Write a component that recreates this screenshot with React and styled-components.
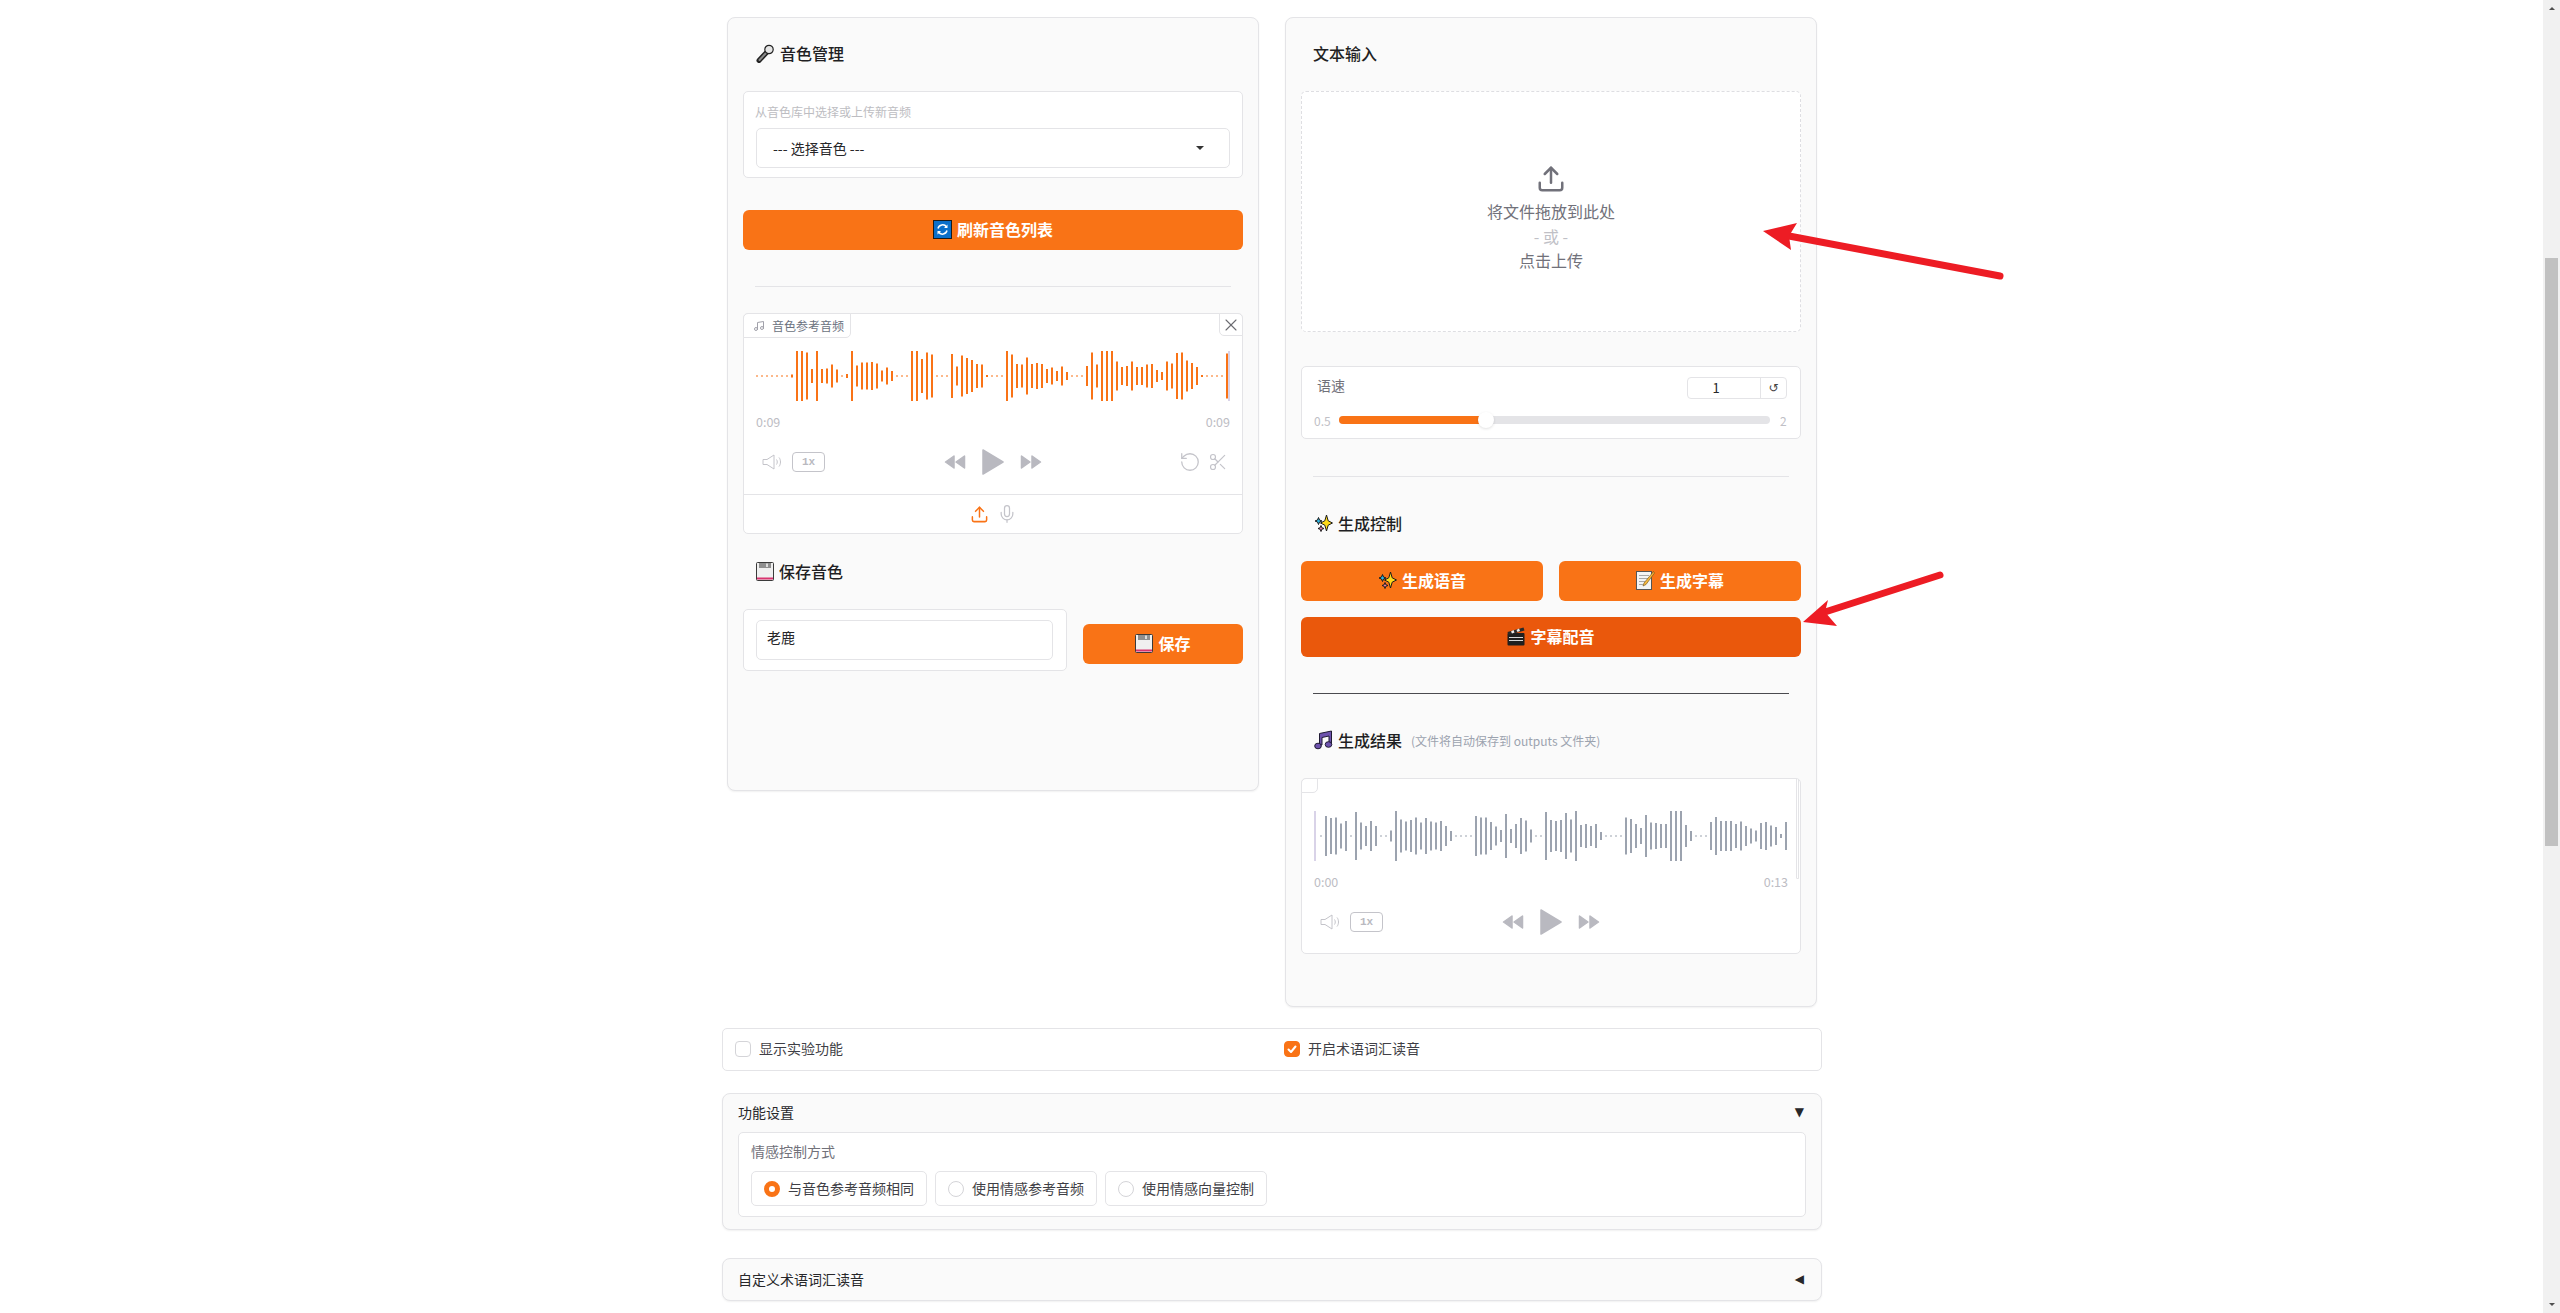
import React from 'react';
import styled, { createGlobalStyle } from 'styled-components';
import { Music, Mic, RotateCcw, Scissors, Upload, X } from 'lucide-react';

const ORANGE = '#f97316';
const BORDER = '#e4e4e7';

// bar heights in px, read off the reference waveforms
const refWave = [1,1,1,1,1,1,1,3,50,50,47,14,50,14,15,23,13,1,4,50,21,27,27,28,25,11,17,10,1,1,1,50,50,34,47,43,1,1,1,44,19,41,36,32,24,23,2,1,1,1,50,43,24,23,37,24,26,24,14,17,10,19,8,1,1,1,20,47,23,50,50,50,29,18,20,29,18,18,23,24,12,8,29,25,46,47,31,26,18,2,1,1,1,1,45];
const resultWave = [1,40,36,37,25,30,1,48,27,20,30,20,1,1,11,50,33,29,32,37,27,36,29,27,30,20,10,1,1,1,1,40,37,37,28,19,12,44,14,24,36,31,13,1,1,48,32,30,32,46,33,50,22,24,20,24,8,1,1,1,1,37,34,24,16,42,27,26,24,24,50,50,50,22,10,1,1,1,28,38,30,30,30,24,29,20,15,11,26,28,21,18,4,28];

const GlobalStyle = createGlobalStyle`
    html, body {
        margin: 0;
        height: 1313px;
        overflow: hidden;
        background: #fff;
        color: #27272a;
        font-family: "Noto Sans CJK SC", "Noto Sans", sans-serif;
    }
    * { box-sizing: border-box; }
`;

const Page = styled.div`
    position: relative;
    display: flex;
    width: 2560px;
    height: 1313px;
    overflow: hidden;
`;

const Main = styled.main`
    flex: 1;
    padding-top: 17px;
`;

const Container = styled.div`
    width: 1100px;
    margin: 0 auto 0 722px;
`;

const Columns = styled.div`
    display: flex;
    align-items: flex-start;
    gap: 26px;
    padding: 0 5px;
`;

const Panel = styled.section`
    width: 532px;
    min-height: ${p => p.$minHeight || 0}px;
    padding: 0 15px ${p => p.$bottom || 0}px;
    background: #fafafa;
    border: 1px solid ${BORDER};
    border-radius: 8px;
    box-shadow: 0 1px 2px rgba(0, 0, 0, .06);
`;

const Title = styled.h3`
    display: flex;
    align-items: center;
    gap: 5px;
    height: 24px;
    margin: ${p => p.$mt}px 0 25px;
    padding: 0 0 2px ${p => (p.$flush ? 12 : 13)}px;
    font-size: 16px;
    font-weight: 500;
    line-height: 22px;
    color: #1f1f23;
`;

const TitleNote = styled.span`
    margin-left: 4px;
    margin-top: 2px;
    font-size: 12px;
    font-weight: 400;
    color: #9ca3af;
`;

const Group = styled.div`
    background: #fff;
    border: 1px solid ${BORDER};
    border-radius: 5px;
`;

const SelectGroup = styled(Group)`
    height: 87px;
    padding: 11px 12px 0;
`;

const SmallLabel = styled.div`
    margin: 0 0 7px -1px;
    font-size: 12px;
    line-height: 18px;
    color: #bdbdc2;
`;

const Select = styled.div`
    display: flex;
    align-items: center;
    justify-content: space-between;
    height: 40px;
    padding: 0 25px 1px 16px;
    border: 1px solid ${BORDER};
    border-radius: 5px;
    font-size: 14px;
    color: #27272a;
`;

const Caret = styled.span`
    width: 0;
    height: 0;
    border-left: 4px solid transparent;
    border-right: 4px solid transparent;
    border-top: 4px solid #333;
`;

const Button = styled.button`
    display: flex;
    align-items: center;
    justify-content: center;
    gap: 5px;
    flex: ${p => (p.$grow ? '1' : 'none')};
    width: ${p => (p.$grow ? 'auto' : p.$width ? `${p.$width}px` : '100%')};
    height: 40px;
    margin-top: ${p => p.$mt || 0}px;
    padding: 0 0 2px;
    border: 0;
    border-radius: 6px;
    background: ${p => (p.$dark ? '#ea580c' : ORANGE)};
    color: #fff;
    font-family: inherit;
    font-size: 16px;
    font-weight: 700;
    line-height: 22px;
`;

const Divider = styled.hr`
    height: 1px;
    margin: ${p => p.$mt || 36}px 12px 0;
    border: 0;
    background: ${p => (p.$dark ? '#4a4a4f' : BORDER)};
`;

const AudioBox = styled.div`
    position: relative;
    margin-top: ${p => p.$mt || 0}px;
    padding-top: ${p => p.$top}px;
    background: #fff;
    border: 1px solid ${BORDER};
    border-radius: 5px;
`;

const AudioTab = styled.div`
    position: absolute;
    top: -1px;
    left: -1px;
    display: flex;
    align-items: center;
    gap: 7px;
    width: ${p => (p.$empty ? 17 : 108)}px;
    height: ${p => (p.$empty ? 15 : 25)}px;
    padding-left: 9px;
    background: #fff;
    border: 1px solid ${BORDER};
    border-radius: 5px 0 5px 0;
    font-size: 12px;
    color: #6b7280;
`;

const CloseTab = styled.div`
    position: absolute;
    top: -1px;
    right: -1px;
    display: flex;
    align-items: center;
    justify-content: center;
    width: 24px;
    height: 23px;
    background: #fff;
    border: 1px solid ${BORDER};
    border-radius: 0 5px 0 5px;
    color: #6b6b70;
`;

const EdgeSliver = styled.div`
    position: absolute;
    top: 0;
    right: 1px;
    width: 3px;
    height: 100px;
    border: 1px solid ${BORDER};
    border-top: 0;
    border-radius: 0 0 3px 3px;
`;

const WaveWrap = styled.div`
    height: 50px;
    margin: 0 12px;
`;

const WaveSvg = styled.svg`
    display: block;
`;

const TimeRow = styled.div`
    display: flex;
    justify-content: space-between;
    margin: 12px 12px 0;
    font-size: 12.5px;
    line-height: 18px;
    color: #bdbdc4;
`;

const ControlRow = styled.div`
    display: grid;
    grid-template-columns: 1fr auto 1fr;
    align-items: center;
    height: 26px;
    margin-top: 18px;
    padding: 0 14px;
    margin-bottom: ${p => p.$bottom || 0}px;
`;

const ControlGroup = styled.div`
    display: flex;
    align-items: center;
    justify-content: ${p => (p.$end ? 'flex-end' : 'flex-start')};
    gap: ${p => p.$gap}px;
    padding-left: ${p => p.$inset || 0}px;
    color: #c4c4ca;
`;

const RateButton = styled.span`
    display: flex;
    align-items: center;
    justify-content: center;
    width: 33px;
    height: 20px;
    border: 1px solid #c4c4ca;
    border-radius: 4px;
    font-family: "Liberation Mono", monospace;
    font-size: 11px;
    font-weight: 700;
    color: #b9b9c0;
`;

const AudioFooter = styled.div`
    display: flex;
    align-items: center;
    justify-content: center;
    gap: 8px;
    height: 39px;
    margin-top: 19px;
    border-top: 1px solid ${BORDER};
    color: #c4c4ca;
`;

const OrangeIcon = styled.span`
    display: flex;
    color: ${ORANGE};
`;

const SaveRow = styled.div`
    display: flex;
    align-items: flex-start;
    gap: 16px;
`;

const InputGroup = styled(Group)`
    width: 324px;
    height: 62px;
    padding: 10px 13px 10px 12px;
`;

const NameInput = styled.div`
    height: 40px;
    padding: 5px 10px;
    border: 1px solid ${BORDER};
    border-radius: 5px;
    font-size: 14px;
    line-height: 22px;
`;

const DropZone = styled.div`
    display: flex;
    flex-direction: column;
    align-items: center;
    height: 241px;
    padding-top: 72px;
    background: #fff;
    border: 1px dashed #dedee2;
    border-radius: 5px;
    color: #71717a;
`;

const DropLine = styled.div`
    margin-top: ${p => p.$mt || 0}px;
    font-size: 16px;
    line-height: 24.5px;
    color: ${p => (p.$muted ? '#c0c0c6' : '#71717a')};
`;

const SliderBox = styled(Group)`
    height: 73px;
    margin-top: 34px;
    padding: 10px 13px 0 12px;
`;

const SliderHead = styled.div`
    display: flex;
    align-items: flex-start;
    justify-content: space-between;
    height: 22px;
`;

const SliderLabel = styled.span`
    margin-left: 3px;
    font-size: 14px;
    line-height: 16px;
    color: #71717a;
`;

const NumberField = styled.div`
    display: flex;
    width: 100px;
    height: 22px;
    border: 1px solid ${BORDER};
    border-radius: 4px;
    font-size: 13px;
    line-height: 19px;
    color: #27272a;
`;

const NumberValue = styled.span`
    flex: 1;
    padding-right: 16px;
    text-align: center;
`;

const ResetCell = styled.span`
    display: flex;
    align-items: center;
    justify-content: center;
    width: 26px;
    border-left: 1px solid ${BORDER};
    font-family: "DejaVu Sans", sans-serif;
    font-size: 12px;
    color: #444;
`;

const SliderRow = styled.div`
    display: flex;
    align-items: center;
    height: 18px;
    margin-top: 12px;
    font-size: 12px;
    color: #c0c0c6;
`;

const SliderMin = styled.span`
    width: 25px;
`;

const SliderMax = styled.span`
    width: 17px;
    padding-left: 10px;
`;

const Track = styled.div`
    position: relative;
    flex: 1;
    height: 8px;
    border-radius: 4px;
    background: #e4e4e7;
`;

const TrackFill = styled.div`
    height: 100%;
    border-radius: 4px 0 0 4px;
    background: ${ORANGE};
`;

const Thumb = styled.div`
    position: absolute;
    top: -4px;
    width: 16px;
    height: 16px;
    margin-left: -8px;
    border-radius: 50%;
    background: #fff;
    box-shadow: 0 1px 3px rgba(0, 0, 0, .12);
`;

const ButtonRow = styled.div`
    display: flex;
    gap: 16px;
`;

const CheckRow = styled.div`
    display: flex;
    align-items: center;
    height: 43px;
    margin-top: 21px;
    padding: 0 0 1px 12px;
    background: #fff;
    border: 1px solid ${BORDER};
    border-radius: 5px;
`;

const CheckItem = styled.label`
    display: flex;
    align-items: center;
    gap: 8px;
    width: ${p => p.$width || 'auto'};
    font-size: 14px;
    line-height: 18px;
    color: #3f3f46;
`;

const CheckText = styled.span`
    padding-bottom: 2px;
`;

const CheckBox = styled.span`
    display: flex;
    align-items: center;
    justify-content: center;
    width: 16px;
    height: 16px;
    border: 1px solid ${p => (p.$on ? ORANGE : '#d4d4d8')};
    border-radius: 4px;
    background: ${p => (p.$on ? ORANGE : '#fff')};
`;

const Accordion = styled.section`
    margin-top: ${p => p.$mt}px;
    padding: 0 15px;
    background: #fafafa;
    border: 1px solid ${BORDER};
    border-radius: 8px;
    box-shadow: 0 1px 2px rgba(0, 0, 0, .06);
`;

const AccordionHead = styled.div`
    display: flex;
    align-items: center;
    justify-content: space-between;
    height: ${p => p.$height}px;
    padding: 0 2px 2px 0;
    font-size: 14px;
    line-height: 18px;
    color: #27272a;
`;

const Toggle = styled.span`
    font-family: "DejaVu Sans", sans-serif;
    font-size: 12px;
    color: #27272a;
`;

const AccordionBody = styled(Group)`
    height: 85px;
    margin-bottom: 12px;
    padding: 9px 12px 0;
`;

const FieldLabel = styled.div`
    margin-bottom: 11px;
    font-size: 14px;
    line-height: 18px;
    color: #71717a;
`;

const RadioRow = styled.div`
    display: flex;
    gap: 8px;
`;

const RadioItem = styled.label`
    display: flex;
    align-items: center;
    gap: 8px;
    height: 35px;
    padding: 0 12px;
    background: #fff;
    border: 1px solid ${BORDER};
    border-radius: 5px;
    font-size: 14px;
    line-height: 18px;
    color: #3f3f46;
`;

const RadioDot = styled.span`
    width: 16px;
    height: 16px;
    border-radius: 50%;
    border: ${p => (p.$on ? `5px solid ${ORANGE}` : '1px solid #d4d4d8')};
    background: #fff;
`;

const Scrollbar = styled.aside`
    display: flex;
    flex-direction: column;
    width: 17px;
    height: 1313px;
    background: #f1f1f1;
`;

const ScrollArrow = styled.div`
    display: flex;
    align-items: center;
    justify-content: center;
    height: 17px;
    margin-top: ${p => (p.$down ? 'auto' : 0)};
    &::after {
        content: '';
        border-left: 3.5px solid transparent;
        border-right: 3.5px solid transparent;
        ${p => (p.$down ? 'border-top' : 'border-bottom')}: 3px solid #505050;
    }
`;

const ScrollThumb = styled.div`
    height: 588px;
    margin: 241px 2px 0;
    background: #c1c1c1;
`;

const Annotations = styled.svg`
    position: absolute;
    top: 0;
    left: 0;
    pointer-events: none;
`;

const Wave = ({ bars, color, startX, width, cursorX, thickLast }) =>
    <WaveWrap>
        <WaveSvg width={width} height="50" viewBox={`0 0 ${width} 50`}>
            {bars.map((h, i) =>
                <rect key={i} x={startX + i * 5} y={25 - h / 2} width={thickLast && i === bars.length - 1 ? 2.5 : 2} height={h} fill={color} />
            )}
            <rect x={cursorX} y="0" width="2" height="50" fill="#d9d3e8" />
        </WaveSvg>
    </WaveWrap>

const VolumeIcon = () =>
    <svg width="21" height="16" viewBox="0 0 21 16" fill="none" stroke="currentColor" strokeWidth="1">
        <path d="M1 5.500h4L12 1v14L5 10.500H1z" strokeLinejoin="round" />
        <path d="M14.500 5.500c1 1.500 1 3.500 0 5" />
        <path d="M17 3.500c2 2.500 2 6.500 0 9" />
    </svg>

const SkipIcon = ({ flip }) =>
    <svg width="22" height="16" viewBox="0 0 22 16" fill="#b9b9c0" stroke="#b9b9c0" strokeWidth="1.500" strokeLinejoin="round" transform={flip ? 'scale(-1 1)' : undefined}>
        <path d="M10 2L1.500 8 10 14z" />
        <path d="M20.500 2L12 8l8.500 6z" />
    </svg>

const PlayIcon = () =>
    <svg width="22" height="26" viewBox="0 0 22 26" fill="#b9b9c0" stroke="#b9b9c0" strokeWidth="1.500" strokeLinejoin="round">
        <path d="M1 1l20 12L1 25z" />
    </svg>

const MicEmoji = () =>
    <svg width="19" height="19" viewBox="0 0 19 19">
        <path d="M3 16.500L11 8" stroke="#222" strokeWidth="5" strokeLinecap="round" />
        <path d="M3.500 16L11 8" stroke="#8a8a8a" strokeWidth="2" strokeLinecap="round" />
        <circle cx="13" cy="5.500" r="4.200" fill="#e6e6e6" stroke="#222" strokeWidth="1.200" />
    </svg>

const RefreshEmoji = () =>
    <svg width="19" height="19" viewBox="0 0 19 19">
        <rect x=".5" y=".5" width="18" height="18" fill="#0b6fc9" stroke="#1a1a1a" />
        <path d="M5 8.500a4.700 4.700 0 0 1 8.500-1.500M14 10.500a4.700 4.700 0 0 1-8.500 1.500" fill="none" stroke="#fff" strokeWidth="1.500" />
        <path d="M14.500 4.500v3.500h-3.500zM4.500 14.500V11h3.500z" fill="#fff" />
    </svg>

const SaveEmoji = () =>
    <svg width="18" height="19" viewBox="0 0 18 19">
        <rect x=".5" y=".5" width="17" height="18" rx="1" fill="#f0f0f0" stroke="#3a3a3a" />
        <rect x="3" y="1" width="12" height="5" fill="#8f8f8f" />
        <rect x="10" y="1.500" width="2" height="3.500" fill="#dcdcdc" />
        <rect x="1" y="15.500" width="16" height="2" fill="#d8336e" />
    </svg>

const SparkleEmoji = () =>
    <svg width="19" height="19" viewBox="0 0 19 19" stroke="#1c1c1c" strokeWidth="1" strokeLinejoin="round">
        <path d="M12.500 1l1.700 5.800L18.500 9l-4.300 2.200L12.500 17l-1.700-5.800L6.500 9l4.300-2.200z" fill="#ffd91a" />
        <path d="M4.500 3.500l1 2.500 2.500 1-2.500 1-1 2.500-1-2.500L1 7l2.500-1z" fill="#2cb8e6" />
        <path d="M7 11.500l.8 2.200 2.200.8-2.200.8L7 17.500l-.8-2.200-2.200-.8 2.200-.8z" fill="#ef7fb4" />
    </svg>

const MemoEmoji = () =>
    <svg width="19" height="20" viewBox="0 0 19 20">
        <rect x=".5" y="1.500" width="15" height="18" fill="#f4f4f4" stroke="#555" />
        <path d="M3 5.500h10M3 8.500h9M3 11.500h6M3 14.500h4" stroke="#a8a8a8" />
        <path d="M17.500 1.500L8 13l-1 3 3-1.500L18.500 3z" fill="#f5b83d" stroke="#6b4a12" strokeWidth=".6" />
    </svg>

const ClapperEmoji = () =>
    <svg width="18" height="19" viewBox="0 0 18 19">
        <rect x=".5" y="6" width="17" height="12.500" rx="1" fill="#1f1f1f" />
        <path d="M2 10.500h14M2 13.500h14" stroke="#d8d8d8" />
        <path d="M.5 5L16.500.5 17.500 3.500 1.500 8z" fill="#2a2a2a" />
        <path d="M4 4.500L6.500 3l1 2.500-2.500 1zM9.500 3L12 1.500l1 2.500-2.500 1z" fill="#eee" />
    </svg>

const NoteEmoji = () =>
    <svg width="19" height="20" viewBox="0 0 19 20" fill="#6d52ad" stroke="#1f1a33" strokeWidth="1">
        <path d="M5.500 15V3.500L17.500 1v13h-2.500V6L8 7.500V15z" />
        <ellipse cx="4" cy="16" rx="3.300" ry="2.800" />
        <ellipse cx="14.500" cy="14.500" rx="3.300" ry="2.800" />
    </svg>

const CheckMark = () =>
    <svg width="10" height="9" viewBox="0 0 10 9" fill="none" stroke="#fff" strokeWidth="2" strokeLinecap="round" strokeLinejoin="round">
        <path d="M1.500 4.500L4 7l4.500-5.500" />
    </svg>

const Arrow = ({ head, tail, notch }) =>
    <>
        <line x1={notch[0]} y1={notch[1]} x2={tail[0]} y2={tail[1]} stroke="#ed1c24" strokeWidth="7" strokeLinecap="round" />
        <polygon points={head} fill="#ed1c24" />
    </>

const PlaybackControls = () =>
    <ControlGroup $gap={16}>
        <SkipIcon />
        <PlayIcon />
        <SkipIcon flip />
    </ControlGroup>

const VolumeControls = () =>
    <ControlGroup $gap={9} $inset={4}>
        <VolumeIcon />
        <RateButton>1x</RateButton>
    </ControlGroup>

const App = () =>
    <Page>
        <GlobalStyle />
        <Main>
            <Container>
                <Columns>
                    <Panel $minHeight={774}>
                        <Title $mt={24}><MicEmoji />音色管理</Title>
                        <SelectGroup>
                            <SmallLabel>从音色库中选择或上传新音频</SmallLabel>
                            <Select>--- 选择音色 ---<Caret /></Select>
                        </SelectGroup>
                        <Button $mt={32}><RefreshEmoji />刷新音色列表</Button>
                        <Divider />
                        <AudioBox $mt={26} $top={37}>
                            <AudioTab><Music size={12} color="#a1a1aa" />音色参考音频</AudioTab>
                            <CloseTab><X size={20} strokeWidth={1.3} /></CloseTab>
                            <Wave bars={refWave} color="#f97316" startX={0} width={474} cursorX={472} thickLast />
                            <TimeRow><span>0:09</span><span>0:09</span></TimeRow>
                            <ControlRow>
                                <VolumeControls />
                                <PlaybackControls />
                                <ControlGroup $gap={7} $end>
                                    <RotateCcw size={22} strokeWidth={1.4} />
                                    <Scissors size={20} strokeWidth={1.4} />
                                </ControlGroup>
                            </ControlRow>
                            <AudioFooter>
                                <OrangeIcon><Upload size={19} strokeWidth={1.9} /></OrangeIcon>
                                <Mic size={20} strokeWidth={1.5} />
                            </AudioFooter>
                        </AudioBox>
                        <Title $mt={26}><SaveEmoji />保存音色</Title>
                        <SaveRow>
                            <InputGroup><NameInput>老鹿</NameInput></InputGroup>
                            <Button $width={160} $mt={15}><SaveEmoji />保存</Button>
                        </SaveRow>
                    </Panel>

                    <Panel $bottom={52}>
                        <Title $mt={24} $flush>文本输入</Title>
                        <DropZone>
                            <Upload size={30} strokeWidth={2} />
                            <DropLine $mt={5}>将文件拖放到此处</DropLine>
                            <DropLine $muted>- 或 -</DropLine>
                            <DropLine>点击上传</DropLine>
                        </DropZone>
                        <SliderBox>
                            <SliderHead>
                                <SliderLabel>语速</SliderLabel>
                                <NumberField>
                                    <NumberValue>1</NumberValue>
                                    <ResetCell>↺</ResetCell>
                                </NumberField>
                            </SliderHead>
                            <SliderRow>
                                <SliderMin>0.5</SliderMin>
                                <Track>
                                    <TrackFill style={{ width: '34%' }} />
                                    <Thumb style={{ left: '34%' }} />
                                </Track>
                                <SliderMax>2</SliderMax>
                            </SliderRow>
                        </SliderBox>
                        <Divider $mt={37} />
                        <Title $mt={35}><SparkleEmoji />生成控制</Title>
                        <ButtonRow>
                            <Button $grow><SparkleEmoji />生成语音</Button>
                            <Button $grow><MemoEmoji />生成字幕</Button>
                        </ButtonRow>
                        <Button $dark $mt={16}><ClapperEmoji />字幕配音</Button>
                        <Divider $dark />
                        <Title $mt={35}><NoteEmoji />生成结果<TitleNote>(文件将自动保存到 outputs 文件夹)</TitleNote></Title>
                        <AudioBox $top={32}>
                            <AudioTab $empty />
                            <EdgeSliver />
                            <Wave bars={resultWave} color="#9ca3af" startX={6} width={474} cursorX={0} />
                            <TimeRow><span>0:00</span><span>0:13</span></TimeRow>
                            <ControlRow $bottom={18}>
                                <VolumeControls />
                                <PlaybackControls />
                                <span />
                            </ControlRow>
                        </AudioBox>
                    </Panel>
                </Columns>

                <CheckRow>
                    <CheckItem $width="549px"><CheckBox /><CheckText>显示实验功能</CheckText></CheckItem>
                    <CheckItem><CheckBox $on><CheckMark /></CheckBox><CheckText>开启术语词汇读音</CheckText></CheckItem>
                </CheckRow>

                <Accordion $mt={22}>
                    <AccordionHead $height={38}>功能设置<Toggle>▼</Toggle></AccordionHead>
                    <AccordionBody>
                        <FieldLabel>情感控制方式</FieldLabel>
                        <RadioRow>
                            <RadioItem><RadioDot $on /><CheckText>与音色参考音频相同</CheckText></RadioItem>
                            <RadioItem><RadioDot /><CheckText>使用情感参考音频</CheckText></RadioItem>
                            <RadioItem><RadioDot /><CheckText>使用情感向量控制</CheckText></RadioItem>
                        </RadioRow>
                    </AccordionBody>
                </Accordion>

                <Accordion $mt={28}>
                    <AccordionHead $height={41}>自定义术语词汇读音<Toggle>◀</Toggle></AccordionHead>
                </Accordion>
            </Container>
        </Main>

        <Scrollbar>
            <ScrollArrow />
            <ScrollThumb />
            <ScrollArrow $down />
        </Scrollbar>

        <Annotations width="2560" height="1313">
            <Arrow head="1763,231 1797,223 1789,236 1791,250" notch={[1789, 236]} tail={[2000, 276]} />
            <Arrow head="1803,622 1828,600 1825,612 1837,626" notch={[1825, 612]} tail={[1940, 575]} />
        </Annotations>
    </Page>

export default App
